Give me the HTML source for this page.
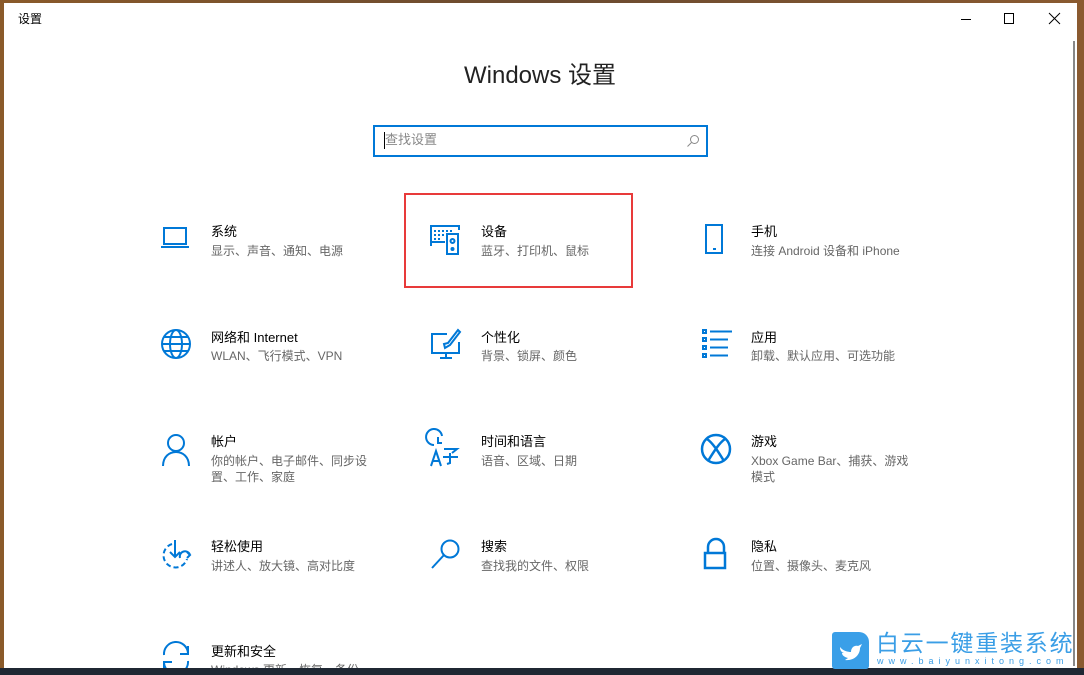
<!DOCTYPE html>
<html><head><meta charset="utf-8"><style>
*{margin:0;padding:0;box-sizing:border-box}
body{width:1084px;height:675px;overflow:hidden;position:relative;background:linear-gradient(90deg,#8a5a2a,#6a4a30 50%,#8a5a30);font-family:"Liberation Sans","Noto Sans CJK SC",sans-serif}
.bot{position:absolute;left:0;top:668px;width:1084px;height:7px;background:#1f2733}
.win{position:absolute;left:4px;top:3px;width:1073px;height:665px;background:#fff;overflow:hidden}
.abs{position:absolute}
.t{position:absolute;font-size:13px;color:#000;line-height:16px;white-space:nowrap}
.s{position:absolute;font-size:12px;color:#666;line-height:16px;white-space:nowrap}
svg{position:absolute;overflow:visible}
</style></head><body>
<div class="bot"></div>
<div class="win">
<div class="t" style="left:14px;top:8px;font-size:12px">设置</div>
<div class="abs" style="left:957px;top:16px;width:10px;height:1px;background:#000"></div>
<div class="abs" style="left:1000px;top:10px;width:10px;height:11px;border:1px solid #000"></div>
<svg style="left:1045px;top:10px" width="11" height="11"><path d="M0 0L11 11M11 0L0 11" stroke="#000" stroke-width="1"/></svg>
<div class="abs" style="left:1069px;top:38px;width:2px;height:625px;background:#888"></div>
<div class="t" style="left:0;width:1073px;text-align:center;top:58px;font-size:24px;line-height:30px;color:#222;padding-right:1px">Windows 设置</div>
<div class="abs" style="left:369px;top:122px;width:335px;height:32px;border:2px solid #0078d7"></div>
<div class="abs" style="left:380px;top:129px;width:1px;height:17px;background:#000"></div>
<div class="s" style="left:381px;top:129px;font-size:13px;color:#888">查找设置</div>
<svg style="left:683px;top:132px" width="12" height="12"><circle cx="7.5" cy="4.5" r="4" fill="none" stroke="#888"/><path d="M4.5 7.5L0.5 11.5" stroke="#888"/></svg>
<div class="abs" style="left:400px;top:190px;width:229px;height:95px;border:2px solid #e83a3a"></div>

<svg style="left:156px;top:223px" width="32" height="26" fill="none" stroke="#0078d7" stroke-width="2"><rect x="4" y="2" width="22" height="16"/><path d="M1 21H29"/></svg>
<div class="t" style="left:207px;top:221px">系统</div><div class="s" style="left:207px;top:240px">显示、声音、通知、电源</div>
<svg style="left:425px;top:221px" width="32" height="32" fill="none" stroke="#0078d7" stroke-width="2"><path d="M2 22V2H30V6"/><path d="M5 7h2M9 7h2M13 7h2M17 7h2M21 7h2M5 11h2M9 11h2M13 11h2M5 15h2M9 15h2M2 18h14"/><rect x="18" y="10" width="11" height="20"/><circle cx="23.5" cy="17" r="2"/><circle cx="23.5" cy="25" r="1"/></svg>
<div class="t" style="left:477px;top:221px">设备</div><div class="s" style="left:477px;top:240px">蓝牙、打印机、鼠标</div>
<svg style="left:700px;top:221px" width="22" height="32" fill="none" stroke="#0078d7" stroke-width="2"><rect x="2" y="1" width="16" height="28"/><path d="M9 25h3"/></svg>
<div class="t" style="left:747px;top:221px">手机</div><div class="s" style="left:747px;top:240px">连接 Android 设备和 iPhone</div>

<svg style="left:156px;top:325px" width="32" height="32" fill="none" stroke="#0078d7" stroke-width="2"><circle cx="16" cy="16" r="14"/><ellipse cx="16" cy="16" rx="6" ry="14"/><path d="M2 16H30M4 9H28M4 23H28"/></svg>
<div class="t" style="left:207px;top:327px">网络和 Internet</div><div class="s" style="left:207px;top:345px">WLAN、飞行模式、VPN</div>
<svg style="left:426px;top:325px" width="32" height="32" fill="none" stroke="#0078d7" stroke-width="2"><path d="M17 6H2V25H29V14"/><path d="M16 25V30M10 30H22"/><path d="M28 2L18 15L14 16L15 20L20 17L30 4Z"/></svg>
<div class="t" style="left:477px;top:327px">个性化</div><div class="s" style="left:477px;top:345px">背景、锁屏、颜色</div>
<svg style="left:697px;top:325px" width="32" height="32" fill="none" stroke="#0078d7" stroke-width="2"><rect x="2" y="2" width="3" height="3"/><rect x="2" y="10" width="3" height="3"/><rect x="2" y="18" width="3" height="3"/><rect x="2" y="26" width="3" height="3"/><path d="M9 3.5H31M9 11.5H27M9 19.5H27M9 27.5H27"/></svg>
<div class="t" style="left:747px;top:327px">应用</div><div class="s" style="left:747px;top:345px">卸载、默认应用、可选功能</div>

<svg style="left:158px;top:430px" width="28" height="34" fill="none" stroke="#0078d7" stroke-width="2"><circle cx="14" cy="10" r="8"/><path d="M1 33C1 24 7 19 14 19S27 24 27 33"/></svg>
<div class="t" style="left:207px;top:431px">帐户</div><div class="s" style="left:207px;top:450px">你的帐户、电子邮件、同步设</div><div class="s" style="left:207px;top:466px">置、工作、家庭</div>
<svg style="left:426px;top:430px" width="32" height="34" fill="none" stroke="#0078d7" stroke-width="2"><path d="M12 3A8 8 0 1 0 4 12"/><path d="M8 4V10H12"/><path d="M1 33L6 18L11 33M3 28H9"/><path d="M14 16H27L22 20M20 20V30L17 31M13 24H28"/></svg>
<div class="t" style="left:477px;top:431px">时间和语言</div><div class="s" style="left:477px;top:450px">语音、区域、日期</div>
<svg style="left:696px;top:430px" width="32" height="32" fill="none" stroke="#0078d7" stroke-width="2.5"><circle cx="16" cy="16" r="14"/><path d="M7 6C13 10 19 20 24 28M25 6C19 10 13 20 8 28"/></svg>
<div class="t" style="left:747px;top:431px">游戏</div><div class="s" style="left:747px;top:450px">Xbox Game Bar、捕获、游戏</div><div class="s" style="left:747px;top:466px">模式</div>

<svg style="left:156px;top:536px" width="32" height="32" fill="none" stroke="#0078d7" stroke-width="2"><path d="M12 5A12 12 0 1 0 27 20" stroke-dasharray="5 3"/><path d="M15 1V17M10 13L15 18L20 13M20 19A5 5 0 0 1 30 16M27 13L30 16L27 19"/></svg>
<div class="t" style="left:207px;top:536px">轻松使用</div><div class="s" style="left:207px;top:555px">讲述人、放大镜、高对比度</div>
<svg style="left:426px;top:536px" width="32" height="32" fill="none" stroke="#0078d7" stroke-width="2"><circle cx="20" cy="10" r="8.5"/><path d="M14 16L2 29"/></svg>
<div class="t" style="left:477px;top:536px">搜索</div><div class="s" style="left:477px;top:555px">查找我的文件、权限</div>
<svg style="left:699px;top:535px" width="26" height="32" fill="none" stroke="#0078d7" stroke-width="2.5"><path d="M5 15V9A8 8 0 0 1 21 9V15"/><rect x="2" y="15" width="20" height="15"/></svg>
<div class="t" style="left:747px;top:536px">隐私</div><div class="s" style="left:747px;top:555px">位置、摄像头、麦克风</div>

<svg style="left:156px;top:639px" width="32" height="32" fill="none" stroke="#0078d7" stroke-width="2"><path d="M4 13A12 12 0 0 1 28 11M28 4V12H20"/><path d="M28 19A12 12 0 0 1 4 21M4 28V20H12"/></svg>
<div class="t" style="left:207px;top:641px">更新和安全</div><div class="s" style="left:207px;top:659px">Windows 更新、恢复、备份</div>
</div>
<div class="abs" style="left:832px;top:632px;width:37px;height:37px;background:#3a9fe8;border-radius:3px 10px 3px 3px"></div>
<svg style="left:836px;top:638px" width="30" height="26"><path d="M4 9C7 13 12 14 15 14C15 10 18 7 22 8L26 6L24 10C24 17 18 23 9 22L12 20C8 19 6 17 6 15L8 15C5 14 4 12 4 9Z" fill="#fff"/></svg>
<div class="t" style="left:876px;top:630px;font-size:23px;line-height:26px;color:#3a9ee6;letter-spacing:1.8px">白云一键重装系统</div>
<div class="t" style="left:877px;top:656px;font-size:9px;line-height:11px;color:#3a9ee6;letter-spacing:5px">www.baiyunxitong.com</div>
</body></html>
